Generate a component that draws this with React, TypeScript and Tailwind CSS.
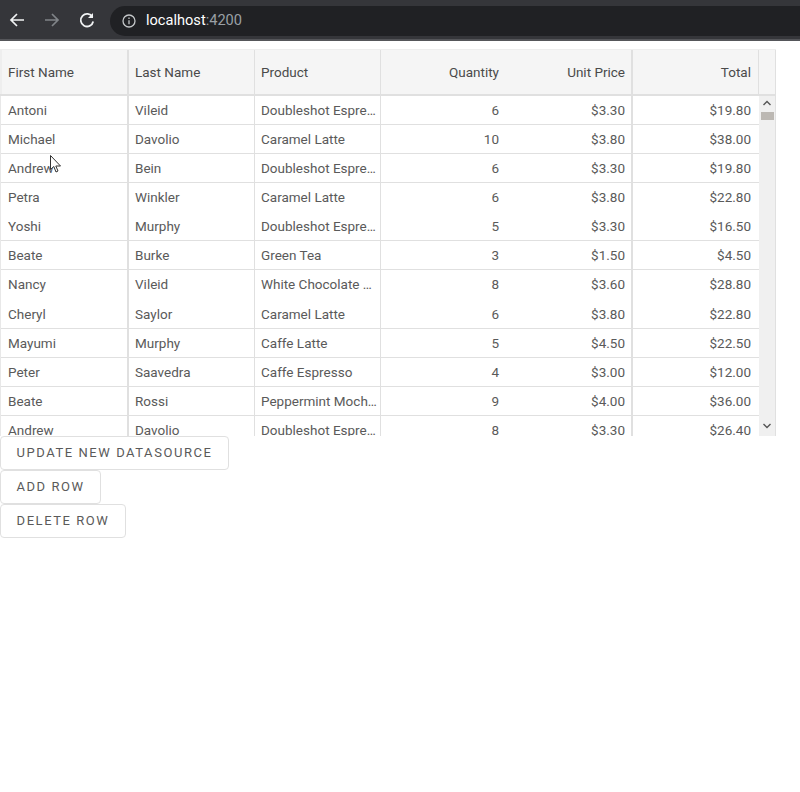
const rows = [
  ["Antoni", "Vileid", "Doubleshot Espresso", "6", "$3.30", "$19.80", true],
  ["Michael", "Davolio", "Caramel Latte", "10", "$3.80", "$38.00", true],
  ["Andrew", "Bein", "Doubleshot Espresso", "6", "$3.30", "$19.80", true],
  ["Petra", "Winkler", "Caramel Latte", "6", "$3.80", "$22.80", false],
  ["Yoshi", "Murphy", "Doubleshot Espresso", "5", "$3.30", "$16.50", true],
  ["Beate", "Burke", "Green Tea", "3", "$1.50", "$4.50", true],
  ["Nancy", "Vileid", "White Chocolate Mocha", "8", "$3.60", "$28.80", false],
  ["Cheryl", "Saylor", "Caramel Latte", "6", "$3.80", "$22.80", true],
  ["Mayumi", "Murphy", "Caffe Latte", "5", "$4.50", "$22.50", true],
  ["Peter", "Saavedra", "Caffe Espresso", "4", "$3.00", "$12.00", true],
  ["Beate", "Rossi", "Peppermint Mocha Twist", "9", "$4.00", "$36.00", true],
  ["Andrew", "Davolio", "Doubleshot Espresso", "8", "$3.30", "$26.40", true],
] as const;

function Row({ r }: { r: (typeof rows)[number] }) {
  return (
    <div className={`flex h-[29.09px] shrink-0 ${r[6] ? "border-b border-[#e0e0e0]" : ""}`}>
      <div className="w-[128px] shrink-0 truncate border-r-2 border-[#e0e0e0] pl-[7px] pr-1 leading-[29px]">{r[0]}</div>
      <div className="w-[126px] shrink-0 truncate border-r border-[#e0e0e0] px-[6px] leading-[29px]">{r[1]}</div>
      <div className="w-[126px] shrink-0 truncate border-r border-[#e0e0e0] pl-[6px] pr-[3px] leading-[29px]">{r[2]}</div>
      <div className="w-[126px] shrink-0 truncate pl-[7px] pr-2 text-right leading-[29px]">{r[3]}</div>
      <div className="w-[126px] shrink-0 truncate border-r-2 border-[#e0e0e0] pl-2 pr-[6px] text-right leading-[29px]">{r[4]}</div>
      <div className="w-[126px] shrink-0 truncate pl-[7px] pr-2 text-right leading-[29px]">{r[5]}</div>
    </div>
  );
}

export default function App() {
  return (
    <div className="relative h-[792px] w-[800px] overflow-hidden bg-white font-['Roboto',sans-serif] text-[13.5px] text-[#5a5a5a]">
      {/* BROWSER BAR */}
      <div className="flex h-[41px] items-start border-b-2 border-[#55565a] bg-[#35363a]">
        <div className="flex h-[40px] items-center gap-[17px] pl-[8px] pr-[14px] pb-[1px]">
          <svg width="18" height="18" viewBox="0 0 18 18" fill="none" stroke="#f1f3f4" strokeWidth="1.7">
            <path d="M16 9H3M9 3 3 9l6 6" />
          </svg>
          <svg width="18" height="18" viewBox="0 0 18 18" fill="none" stroke="#808488" strokeWidth="1.7">
            <path d="M2 9h13M9 3l6 6-6 6" />
          </svg>
          <svg width="18" height="18" viewBox="0 0 18 18" fill="none" stroke="#f1f3f4" strokeWidth="1.8">
            <path d="M14.5 6A6.3 6.3 0 1 0 15.2 10.500" />
            <path d="M15 2v5h-5" fill="#f1f3f4" stroke="none" />
          </svg>
        </div>
        <div className="mt-[6px] flex h-[30px] flex-1 items-center rounded-l-[15px] bg-[#202124] pl-3">
          <svg width="14" height="14" viewBox="0 0 14 14" fill="none" stroke="#c4c7c9" strokeWidth="1.3">
            <circle cx="7" cy="7" r="6" />
            <path d="M7 6.2v4M7 3.6v1.400" />
          </svg>
          <span className="ml-[10px] text-[14.6px] text-white">
            localhost<span className="text-[#9aa0a6]">:4200</span>
          </span>
        </div>
      </div>

      {/* GRID */}
      <div className="mt-2 flex h-[387px] w-[776px] flex-col overflow-hidden border-t border-[#eeeeee]">
        <div className="flex h-[46px] w-[776px] shrink-0 border-b-2 border-[#e0e0e0] bg-[#f5f5f5] text-[#4a4a4a]">
          <div className="w-[129px] shrink-0 border-x-2 border-r-2 border-[#e0e0e0] border-l-[#eeeeee] pl-[6px] leading-[44px]">First Name</div>
          <div className="w-[126px] shrink-0 border-r border-[#e0e0e0] px-[6px] leading-[44px]">Last Name</div>
          <div className="w-[126px] shrink-0 border-r border-[#e0e0e0] px-[6px] leading-[44px]">Product</div>
          <div className="w-[126px] shrink-0 pl-[7px] pr-2 text-right leading-[44px]">Quantity</div>
          <div className="w-[126px] shrink-0 border-r-2 border-[#e0e0e0] pl-2 pr-[6px] text-right leading-[44px]">Unit Price</div>
          <div className="w-[126px] shrink-0 border-r border-[#e0e0e0] px-[7px] text-right leading-[44px]">Total</div>
          <div className="flex-1 border-r border-[#e0e0e0]" />
        </div>
        <div className="flex min-h-0 flex-1">
          <div className="w-[759px] shrink-0 overflow-hidden border-l border-[#e8e8e8]">
            {rows.map((r, i) => (
              <Row key={i} r={r} />
            ))}
          </div>
          {/* SCROLLBAR */}
          <div className="flex flex-1 flex-col items-center border-r border-[#e0e0e0] bg-[#f0f0f0]">
            <svg className="mt-[4px]" width="10" height="6" viewBox="0 0 10 6" fill="none" stroke="#555" strokeWidth="1.4">
              <path d="M1.5 5 5 1.5 8.5 5" />
            </svg>
            <div className="mt-[6px] h-[8px] w-[13px] bg-[#bcb8b3]" />
            <svg className="mt-auto mb-[7px]" width="10" height="6" viewBox="0 0 10 6" fill="none" stroke="#555" strokeWidth="1.4">
              <path d="M1.5 1 5 4.500 8.5 1" />
            </svg>
          </div>
        </div>
      </div>

      {/* BUTTONS */}
      <div className="flex flex-col items-start">
        <button className="h-[34px] w-[229px] rounded border border-[#e0e0e0] bg-white text-center text-[13px] tracking-[1.55px] text-[#5a5a5a]">UPDATE NEW DATASOURCE</button>
        <button className="h-[34px] w-[101px] rounded border border-[#e0e0e0] bg-white text-center text-[13px] tracking-[1.55px] text-[#5a5a5a]">ADD ROW</button>
        <button className="h-[34px] w-[126px] rounded border border-[#e0e0e0] bg-white text-center text-[13px] tracking-[1.55px] text-[#5a5a5a]">DELETE ROW</button>
      </div>

      {/* MOUSE CURSOR */}
      <svg className="absolute left-[50px] top-[155px]" width="13" height="20" viewBox="0 0 13 20" fill="#fff" stroke="#333" strokeWidth="1">
        <path d="M.5.5v14l3.300-3 2.200 5.500 2-1-2.200-5h4.700z" />
      </svg>
    </div>
  );
}
